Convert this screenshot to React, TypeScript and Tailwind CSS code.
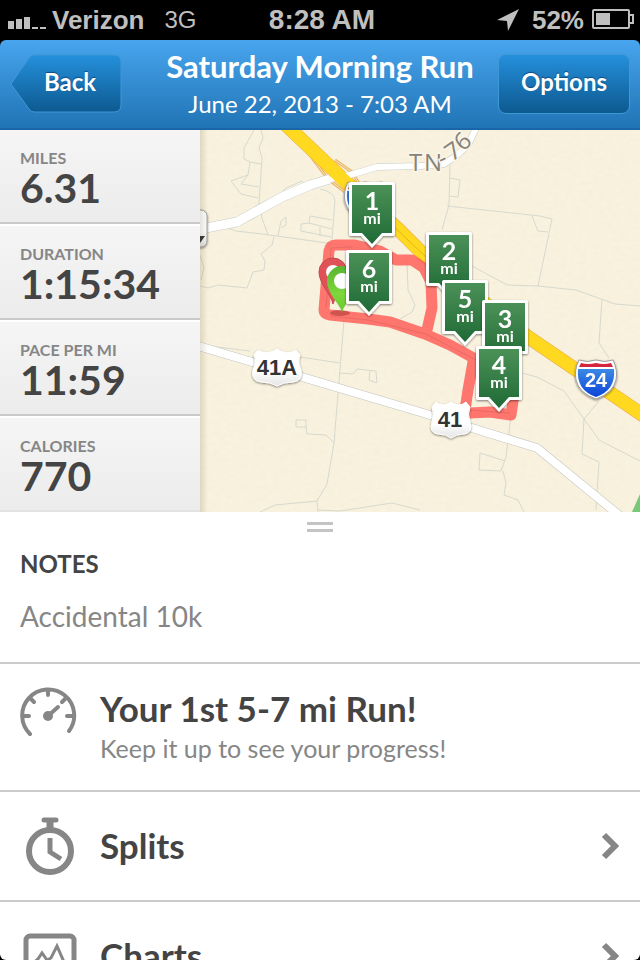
import type { ReactNode } from "react";

const stats = [
  { label: "MILES", value: "6.31" },
  { label: "DURATION", value: "1:15:34" },
  { label: "PACE PER MI", value: "11:59" },
  { label: "CALORIES", value: "770" },
];

const markers = [
  { mile: 1, x: 149, y: 52 },
  { mile: 2, x: 226, y: 102 },
  { mile: 5, x: 242, y: 150 },
  { mile: 3, x: 282, y: 170 },
  { mile: 4, x: 276, y: 216 },
  { mile: 6, x: 146, y: 120 },
];

const minorRoads = [
  "M54 0 L44 18 L44 29 L50 32 L61 34 M50 32 L48 45 L31 51 L41 64 L58 68 M48 45 L41 54 L59 57",
  "M61 0 L63 8 L59 18 L62 28 L59 74 L62 88 L68 105",
  "M28 98 L36 101 L62 104 L120 112 L175 120",
  "M82 62 L86 58 L102 51 L104 54 M120 59 Q134 62 135 70 L132 110",
  "M78 106 L81 91 L86 87 L86 95 L81 98",
  "M132 90 L110 86 L109 93 L101 94 L101 101 L131 107 M109 93 L132 99 M120 97 L120 106",
  "M74 107 L72 115 L61 124 L65 131 L64 140 L53 142 L47 158 L18 155 L8 158 L0 156 M0 125 L4 138 L1 150",
  "M250 35 L249 75 L242 100 M249 48 L260 50 L258 67 L249 66 M247 76 L340 86 L352 89 L338 156 M332 86 L338 101 L348 102",
  "M272 136 L307 155 L338 156 L376 160 L415 174 L440 176 M402 169 L399 213 L409 228",
  "M207 130 L208 160 L215 175 L212 182 L200 189",
  "M144 190 L134 313 L127 354 L117 371 L75 375 L60 382 M117 371 L118 382 M134 313 L126 305 L107 304 L106 297 M96 290 H106 V297 H96Z",
  "M0 215 L50 221 M100 227 L140 233 M140 243 L153 244 L157 239 L176 241 L177 253 L169 250 L170 240",
  "M118 380 L140 381 L192 373 L220 380",
  "M322 243 L337 247 L364 261 L384 289 L399 310 L440 331 M399 271 L384 289 L382 324 L399 332 L396 380",
  "M311 285 L306 327 L301 341 L279 340 L280 323 L305 331 M303 341 L306 353 L304 365 L318 370 L324 382",
];

function InterstateShield({ x, y, label }: { x: number; y: number; label?: string }) {
  return (
    <g transform={`translate(${x} ${y})`} filter="url(#drop)">
      <path
        d="M4 1 Q12 4 21 1 Q30 4 38 1 Q43 11 41 21 Q38 34 21 40 Q4 34 1 21 Q-1 11 4 1Z"
        fill="#fff"
        stroke="#a0a0a0"
      />
      <path d="M6 4 Q13 6 21 4 Q29 6 36 4 L38 8 L4 8Z" fill="#d3273c" />
      <path d="M3 10 H39 Q41 31 21 38 Q1 31 3 10Z" fill="url(#interstate)" />
      {label && (
        <text x="21" y="28" textAnchor="middle" fill="#fff" fontSize="20" fontWeight="700" className="font-['Liberation_Sans',sans-serif]">
          {label}
        </text>
      )}
    </g>
  );
}

function MileMarker({ mile, x, y }: { mile: number; x: number; y: number }) {
  return (
    <g transform={`translate(${x} ${y})`} filter="url(#drop)">
      <path d="M2 0 H44 Q46 0 46 2 V52 Q46 54 44 54 H34 L23 66 L12 54 H2 Q0 54 0 52 V2 Q0 0 2 0Z" fill="#fff" />
      <path d="M3 3 H43 V51 H33 L23 62 L13 51 H3Z" fill="url(#marker)" />
      <text x="23" y="28" textAnchor="middle" fill="#fff" fontSize="25" fontWeight="700">
        {mile}
      </text>
      <text x="23" y="42" textAnchor="middle" fill="#fff" fontSize="16" fontWeight="700">
        mi
      </text>
    </g>
  );
}

function RouteMap() {
  return (
    <svg
      viewBox="0 0 440 382"
      preserveAspectRatio="xMinYMin slice"
      role="img"
      aria-label="Route map"
      className="h-full w-full bg-[#f9f2df] font-[Lato,sans-serif]"
    >
      <defs>
        <linearGradient id="marker" x2="0" y2="1">
          <stop stopColor="#4b9157" />
          <stop offset="1" stopColor="#206a36" />
        </linearGradient>
        <linearGradient id="interstate" x2="0" y2="1">
          <stop stopColor="#3b8ae6" />
          <stop offset="1" stopColor="#0c45d8" />
        </linearGradient>
        <linearGradient id="shield" x2="0" y2="1">
          <stop offset="0.6" stopColor="#fff" />
          <stop offset="1" stopColor="#e4e4e4" />
        </linearGradient>
        <linearGradient id="greenPin" x2="0" y2="1">
          <stop stopColor="#57b52f" />
          <stop offset="0.6" stopColor="#7ed63c" />
          <stop offset="1" stopColor="#6cc832" />
        </linearGradient>
        <linearGradient id="edge">
          <stop stopColor="#5a4a20" stopOpacity="0.16" />
          <stop offset="1" stopColor="#5a4a20" stopOpacity="0" />
        </linearGradient>
        <filter id="drop" x="-20%" y="-20%" width="140%" height="150%">
          <feDropShadow dx="0" dy="1" stdDeviation="1" floodOpacity="0.5" />
        </filter>
        <filter id="paper" x="0" y="0" width="100%" height="100%">
          <feTurbulence type="fractalNoise" baseFrequency="0.15 0.25" numOctaves="3" seed="4" />
          <feColorMatrix values="0 0 0 0 0.6  0 0 0 0 0.5  0 0 0 0 0.25  0.1 0 0 0 -0.03" />
        </filter>
      </defs>

      <rect width="440" height="382" filter="url(#paper)" />
      <path d="M440 364 L432 382 H440Z" fill="#78c878" />

      <g fill="none" stroke="#d6d9cf" strokeWidth="1">
        {minorRoads.map((d) => (
          <path key={d} d={d} />
        ))}
      </g>

      <g fill="none" strokeLinejoin="round">
        <path d="M110 25 L128 49 L145 62 M135 30 L152 42 L160 55" stroke="#e9b66b" strokeWidth="3" />
        <path d="M110 25 L128 49 L145 62 M135 30 L152 42 L160 55" stroke="#fbe3ae" />
        <path d="M86 -5 L145 51 L198 99 L226 127 L328 207 L450 290" stroke="#eba84a" strokeWidth="14" />
        <path d="M86 -5 L145 51 L198 99 L226 127 L328 207 L450 290" stroke="#ffd91f" strokeWidth="13" />
        <path d="M190 93 L226 127" stroke="#e8b414" />
        <path d="M-5 100 L37 92 L82 67 L110 55 L130 49" stroke="#c6cac6" strokeWidth="10" />
        <path d="M130 49 L150 45 L177 37 L220 36 L244 34 L256 26 L268 15 L277 -4" stroke="#c6cac6" strokeWidth="7" />
        <path d="M-5 100 L37 92 L82 67 L110 55 L130 49" stroke="#fff" strokeWidth="9" />
        <path d="M130 49 L150 45 L177 37 L220 36 L244 34 L256 26 L268 15 L277 -4" stroke="#fff" strokeWidth="6" />
        <path d="M134 41 L151 57" stroke="#ffd91f" strokeWidth="13" />
        <path d="M-5 215 L55 233 L220 282 L337 318 L425 390" stroke="#c0c4c0" strokeWidth="9" />
        <path d="M-5 215 L55 233 L220 282 L337 318 L425 390" stroke="#fff" strokeWidth="8" />
      </g>

      <text
        x="209 224 242 252 263"
        y="41 41 37 32 22"
        rotate="0 0 -25 -35 -42"
        fontSize="24"
        fill="#86837a"
        stroke="#fbf6e8"
        strokeWidth="3"
        paintOrder="stroke"
        className="font-['Open_Sans',sans-serif] font-medium"
      >
        TN-76
      </text>

      <InterstateShield x={144} y={51} />

      <path
        d="M124 180 L129 121 Q130 115 136 115 L155 115 L180 121 L196 130 L212 130 L224 138 L231 152 L232 178 L227 200 M124 180 Q124 184 130 185 L168 189 L190 192 L225 204 L250 215 L279 231 L273 232 L268 260 L265 280 Q266 284 270 283 L290 282 L311 285 L316 250"
        fill="none"
        stroke="#ff5a55"
        strokeOpacity="0.82"
        strokeWidth="11"
        strokeLinejoin="round"
        strokeLinecap="round"
      />
      <path
        d="M126 178 L131 118 L152 117 M130 186 L168 190 L226 204 L276 230 M268 280 L310 283"
        fill="none"
        stroke="#c85a55"
        strokeOpacity="0.4"
      />

      <rect x="-30" y="80" width="37" height="37" rx="6" fill="url(#shield)" stroke="#a0a0a0" filter="url(#drop)" />
      <path d="M0 106 H5 L0 113Z" fill="#333" />

      <g fill="#333" textAnchor="middle" fontSize="22" fontWeight="700" className="font-['Liberation_Sans',sans-serif]">
        <path
          d="M58 220 Q67 226 77 219 Q87 226 96 220 L100 225 Q97 232 101 240 Q103 251 93 252 Q83 252 77 256 Q71 252 61 252 Q51 251 53 240 Q57 232 54 225Z"
          fill="url(#shield)"
          stroke="#fff"
          strokeLinejoin="round"
          filter="url(#drop)"
        />
        <text x="77" y="245">41A</text>
        <path
          d="M236 272 Q243 278 251 272 Q259 278 266 272 L270 277 Q267 284 270 292 Q273 303 264 304 Q256 304 251 308 Q246 304 238 304 Q229 303 232 292 Q235 284 232 277Z"
          fill="url(#shield)"
          stroke="#fff"
          strokeLinejoin="round"
          filter="url(#drop)"
        />
        <text x="250" y="297">41</text>
      </g>
      <InterstateShield x={375} y={229} label="24" />

      <ellipse cx="140" cy="183" rx="10" ry="3" fill="#8a2020" fillOpacity="0.4" />
      <path
        d="M133 174 C131 164 119 154 119 142 A14 14 0 0 1 147 142 C147 154 136 164 133 174Z"
        fill="#df5358"
        stroke="#c8474c"
      />
      <circle cx="133" cy="142" r="7" fill="#fff" />
      <path
        d="M142 182 C139 173 127 163 127 151 A15 15 0 0 1 157 151 C157 163 145 173 142 182Z"
        fill="url(#greenPin)"
      />
      <circle cx="142" cy="151" r="8" fill="#fff" />

      {markers.map((m) => (
        <MileMarker key={m.mile} {...m} />
      ))}

      <rect width="8" height="382" fill="url(#edge)" />
    </svg>
  );
}

function StatusBar() {
  return (
    <div className="grid h-10 shrink-0 grid-cols-[1fr_auto_1fr] items-center bg-black pr-1 pl-2 font-['Liberation_Sans',sans-serif] text-[26px] leading-10 font-bold text-[#bfbfbf]">
      <div className="flex items-center">
        <svg width="40" height="20" viewBox="0 0 40 20" fill="currentColor" aria-hidden="true">
          <path d="M0 11h6v8H0zM8 9h6v10H8zM16 7h6v12h-6zM24 17h6v2h-6zM32 17h6v2h-6z" />
        </svg>
        <span className="ml-1">Verizon</span>
        <span className="ml-5 text-2xl leading-10 font-normal">3G</span>
      </div>
      <span className="text-[28px] leading-10">8:28 AM</span>
      <div className="flex items-center justify-end">
        <svg width="24" height="24" viewBox="0 0 24 24" fill="currentColor" aria-hidden="true">
          <path d="M23 1 L12 23 L11 13 L1 12Z" />
        </svg>
        <span className="ml-3">52%</span>
        <svg width="44" height="22" viewBox="0 0 44 22" className="ml-2" aria-hidden="true">
          <rect x="1" y="1" width="36" height="18" rx="1" fill="none" stroke="currentColor" strokeWidth="2" />
          <path d="M4 4h14v12H4z" fill="currentColor" />
          <path d="M38 6h3v8h-3" fill="none" stroke="currentColor" strokeWidth="2" />
        </svg>
      </div>
    </div>
  );
}

function Header() {
  return (
    <header className="grid h-[90px] shrink-0 grid-cols-[1fr_auto_1fr] items-start rounded-t-md border-b-2 border-[#1a64a8] bg-linear-to-b from-[#48a5ee] to-[#1f74b4] px-[10px] text-white">
      <button type="button" className="relative mt-[14px] h-[60px] w-28 justify-self-start pb-1 text-2xl font-bold">
        <svg viewBox="0 0 112 60" className="absolute inset-0 h-full w-full" aria-hidden="true">
          <defs>
            <linearGradient id="back" x2="0" y2="1">
              <stop stopColor="#2590dc" />
              <stop offset="1" stopColor="#0d5a90" />
            </linearGradient>
          </defs>
          <path d="M24 1 H104 Q111 1 111 8 V51 Q111 58 104 58 H24 Q21 58 19 55 L1 30 L19 4 Q21 1 24 1Z" fill="url(#back)" stroke="#3d98d6" />
        </svg>
        <span className="relative ml-2 text-shadow-[0_-1px_1px_#0d4a80]">Back</span>
      </button>
      <div className="text-center">
        <h1 className="mt-2 text-[31px] leading-9 font-bold">Saturday Morning Run</h1>
        <p className="mt-1 text-2xl leading-8">June 22, 2013 - 7:03 AM</p>
      </div>
      <button
        type="button"
        className="mt-[14px] h-[60px] w-[132px] justify-self-end rounded-lg border border-[#3d98d6] bg-linear-to-b from-[#2590dc] to-[#0d5a90] pb-1 text-2xl font-bold text-shadow-[0_-1px_1px_#0d4a80]"
      >
        Options
      </button>
    </header>
  );
}

function Chevron() {
  return (
    <svg width="20" height="28" viewBox="0 0 20 28" className="ml-auto" aria-hidden="true">
      <path d="M4 3 L15 14 L4 25" fill="none" stroke="#868686" strokeWidth="6" />
    </svg>
  );
}

function GaugeIcon() {
  return (
    <svg width="60" height="60" viewBox="0 0 60 60" fill="none" stroke="#868686" strokeWidth="4" strokeLinecap="round" aria-hidden="true">
      <path d="M10 48 A26 26 0 1 1 49 45" />
      <path d="M28 4v5M3 30h6M53 30h-6M10 12l4 4M46 12l-4 4" />
      <path d="M28 30 L38 21" />
      <circle cx="28" cy="30" r="5" fill="#868686" stroke="none" />
    </svg>
  );
}

function StopwatchIcon() {
  return (
    <svg width="60" height="60" viewBox="0 0 60 60" fill="none" stroke="#868686" aria-hidden="true">
      <circle cx="30" cy="35" r="21" strokeWidth="6" />
      <path d="M24 4h12" strokeWidth="5" strokeLinecap="round" />
      <path d="M30 4v12" strokeWidth="7" />
      <path d="M30 22v14l11 7" strokeWidth="5" />
    </svg>
  );
}

function ChartIcon() {
  return (
    <svg width="60" height="60" viewBox="0 0 60 60" fill="none" stroke="#868686" aria-hidden="true">
      <rect x="6" y="10" width="48" height="44" rx="4" strokeWidth="5" />
      <path d="M12 38l6-5 4-6 5 7 4-2 6-12 7 16 4 2" strokeWidth="3" />
    </svg>
  );
}

function LinkRow({ icon, label }: { icon: ReactNode; label: string }) {
  return (
    <button type="button" className="flex h-[110px] w-full shrink-0 items-center gap-5 border-b-2 border-[#cacaca] px-5 text-left">
      {icon}
      <span className="pb-[2px] text-[35px] leading-10 font-bold text-[#444]">{label}</span>
      <Chevron />
    </button>
  );
}

export default function App() {
  return (
    <div className="h-dvh bg-black font-[Lato,sans-serif]">
      <div className="flex h-full flex-col overflow-hidden rounded-b-md">
        <StatusBar />
        <Header />

        <section className="grid h-[382px] shrink-0 grid-cols-[200px_1fr] overflow-hidden">
          <dl>
            {stats.map((s) => (
              <div
                key={s.label}
                className="h-24 border-t-2 border-b-2 border-t-white border-b-[#c9c9c9] bg-linear-to-b from-[#f5f5f5] to-[#ececec] px-5 pt-4 first:h-[94px] first:border-t-0 last:border-b-[#e2e2e2]"
              >
                <dt className="text-base leading-6 font-bold text-[#868686]">{s.label}</dt>
                <dd className="text-[41px] leading-9 font-bold text-[#444]">{s.value}</dd>
              </div>
            ))}
          </dl>
          <RouteMap />
        </section>

        <main className="flex flex-1 flex-col overflow-hidden bg-white">
          <div className="mt-[10px] h-[10px] w-[26px] shrink-0 self-center border-y-3 border-[#c4c4c4]" />
          <section className="h-[132px] shrink-0 border-b-2 border-[#cacaca] px-5 pt-4">
            <h2 className="text-2xl leading-8 font-bold text-[#444]">NOTES</h2>
            <p className="mt-[18px] text-[28px] leading-9 text-[#868686]">Accidental 10k</p>
          </section>
          <section className="flex h-32 shrink-0 gap-5 border-b-2 border-[#cacaca] px-5 pt-[22px]">
            <GaugeIcon />
            <div>
              <h2 className="text-[35px] leading-11 font-bold text-[#444]">Your 1st 5-7 mi Run!</h2>
              <p className="mt-[2px] text-[25px] leading-8 text-[#868686]">Keep it up to see your progress!</p>
            </div>
          </section>
          <LinkRow icon={<StopwatchIcon />} label="Splits" />
          <LinkRow icon={<ChartIcon />} label="Charts" />
        </main>
      </div>
    </div>
  );
}
